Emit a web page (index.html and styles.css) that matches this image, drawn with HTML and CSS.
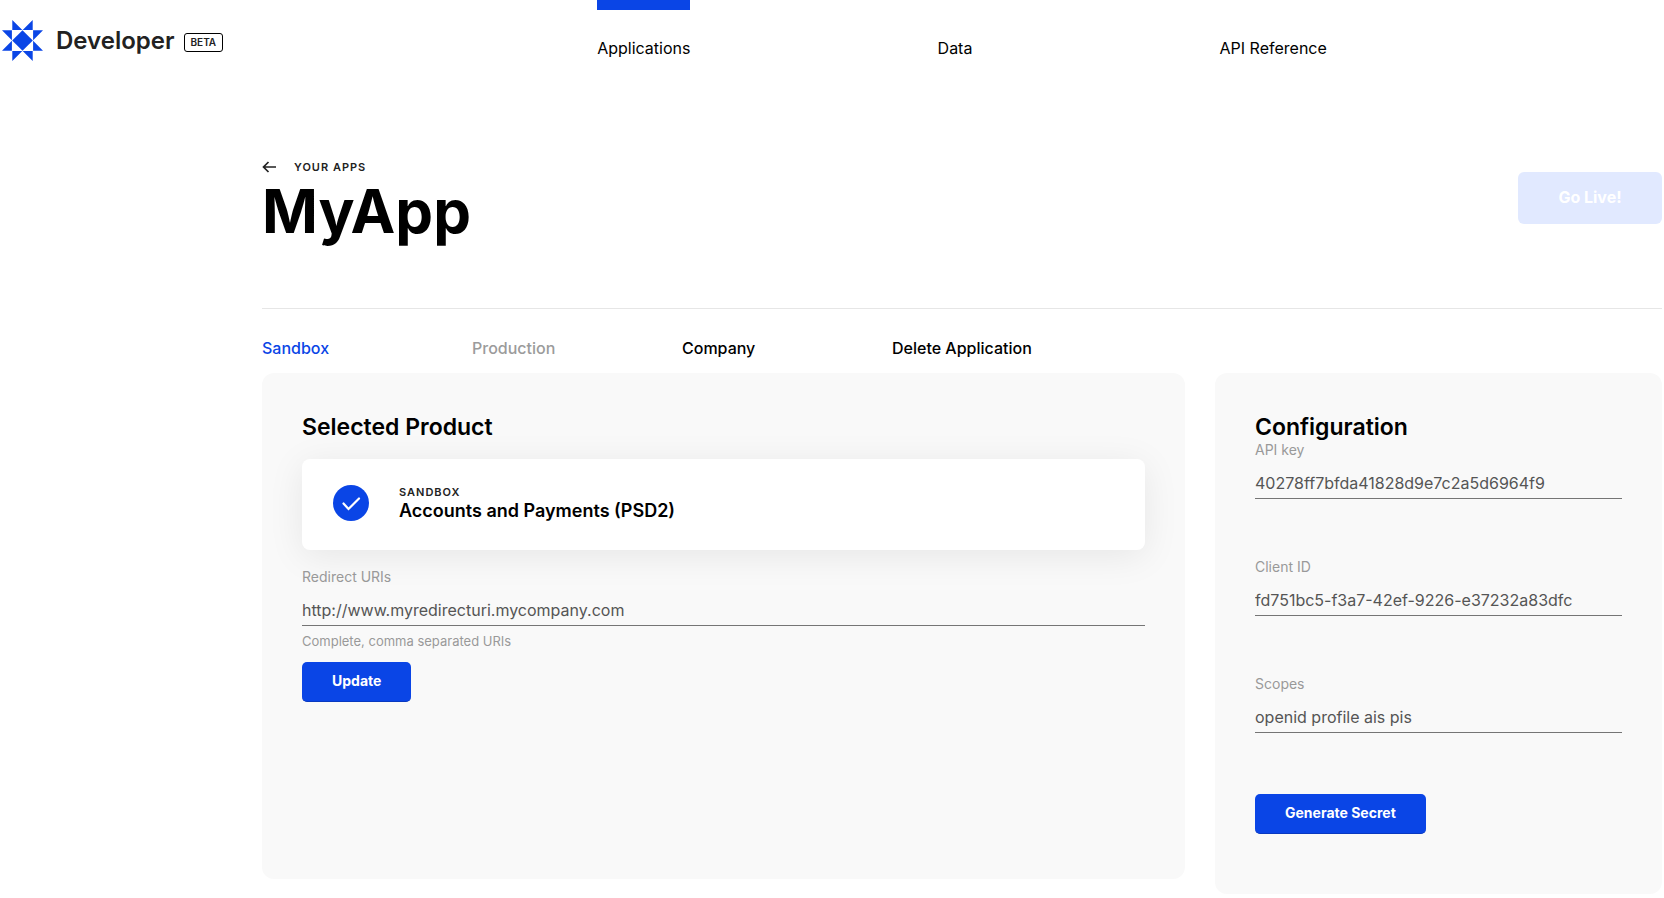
FILE: index.html
```html
<!DOCTYPE html>
<html lang="en">
<head>
<meta charset="utf-8">
<title>MyApp - Developer</title>
<link rel="stylesheet" href="styles.css">
</head>
<body>
<header class="site-header">
  <a class="brand" href="#">
    <svg class="brand-mark" viewBox="0 0 41 41" width="41" height="41" aria-hidden="true">
      <g fill="#0a45e6">
        <path d="M20.500 10.200L30.800 20.500L20.500 30.800L10.200 20.500Z"/>
        <path d="M10.300 0L20.300 9.900H10.300ZM30.700 0L20.700 9.900H30.700ZM10.300 41L20.300 31.100H10.300ZM30.700 41L20.700 31.100H30.700Z"/>
        <path d="M0 10.300H9.900V20.300ZM0 30.700H9.900V20.700ZM41 10.300H31.100V20.300ZM41 30.700H31.100V20.700Z"/>
      </g>
    </svg>
    <span class="brand-name">Developer</span>
    <span class="beta">BETA</span>
  </a>
  <nav class="main-nav">
    <a class="nav-link active" href="#">Applications</a>
    <a class="nav-link" href="#">Data</a>
    <a class="nav-link" href="#">API Reference</a>
  </nav>
</header>
<main class="page">
  <section class="title-row">
    <div>
      <a class="back" href="#">
        <svg width="14" height="12" viewBox="0 0 14 12" fill="none" stroke="#222" stroke-width="1.700" aria-hidden="true"><path d="M14 6H1.500M6.500 1L1.500 6L6.500 11"/></svg>
        Your apps
      </a>
      <h1 class="app-name">MyApp</h1>
    </div>
    <button class="go-live" type="button" disabled>Go Live!</button>
  </section>
  <nav class="tabs">
    <a class="tab current" href="#">Sandbox</a>
    <a class="tab muted" href="#">Production</a>
    <a class="tab" href="#">Company</a>
    <a class="tab" href="#">Delete Application</a>
  </nav>
  <div class="panels">
    <section class="panel panel-product">
      <h2 class="panel-title">Selected Product</h2>
      <div class="product">
        <svg width="36" height="36" viewBox="0 0 36 36" aria-hidden="true"><circle cx="18" cy="18" r="18" fill="#0a45e6"/><path d="M10.500 18.500L15.500 24L26 13.500" fill="none" stroke="#fff" stroke-width="2.200" stroke-linecap="round"/></svg>
        <div>
          <div class="eyebrow">Sandbox</div>
          <div class="product-name">Accounts and Payments (PSD2)</div>
        </div>
      </div>
      <div class="field">
        <label for="uris">Redirect URIs</label>
        <input id="uris" type="text" value="http://www.myredirecturi.mycompany.com">
        <small class="hint">Complete, comma separated URIs</small>
      </div>
      <button class="btn" type="button">Update</button>
    </section>
    <section class="panel panel-config">
      <h2 class="panel-title">Configuration</h2>
      <div class="config-fields">
        <div class="field">
          <label for="key">API key</label>
          <input id="key" type="text" value="40278ff7bfda41828d9e7c2a5d6964f9" readonly>
        </div>
        <div class="field">
          <label for="client">Client ID</label>
          <input id="client" type="text" value="fd751bc5-f3a7-42ef-9226-e37232a83dfc" readonly>
        </div>
        <div class="field">
          <label for="scopes">Scopes</label>
          <input id="scopes" type="text" value="openid profile ais pis" readonly>
        </div>
      </div>
      <button class="btn" type="button">Generate Secret</button>
    </section>
  </div>
</main>
</body>
</html>
```
FILE: styles.css
```css
* { box-sizing: border-box; }
body {
  margin: 0;
  background: #fff;
  color: #000;
  font-family: Inter, "Liberation Sans", sans-serif;
  font-size: 16px;
  line-height: 20px;
}
a { color: inherit; text-decoration: none; }
button, input { font-family: inherit; }

.site-header {
  display: grid;
  grid-template-columns: 350px 1fr 90px;
  align-items: start;
}
.brand {
  display: flex;
  align-items: center;
  padding: 20px 0 0 2px;
  color: #222;
}
.brand-name {
  margin-left: 13px;
  font-size: 24px;
  line-height: 28px;
  font-weight: 600;
}
.beta {
  margin: 4px 0 0 9px;
  padding: 0 6px;
  border: 1px solid #000;
  border-radius: 3px;
  font-size: 10px;
  line-height: 17px;
  font-weight: 600;
}
.main-nav { display: flex; justify-content: space-evenly; }
.nav-link { padding-top: 28px; border-top: 10px solid transparent; }
.nav-link.active { border-top-color: #0a45e6; }

.page { padding: 98px 2px 0 262px; }
.title-row {
  display: flex;
  justify-content: space-between;
  align-items: flex-start;
  padding-bottom: 60px;
  border-bottom: 1px solid #e6e6e6;
}
.back, .eyebrow {
  color: #222;
  font-size: 11px;
  line-height: 16px;
  font-weight: 600;
  letter-spacing: 1px;
  text-transform: uppercase;
}
.back { display: flex; align-items: center; gap: 18px; }
.app-name {
  margin: 0;
  font-size: 60px;
  line-height: 73px;
  font-weight: 700;
}
.go-live {
  width: 144px;
  height: 52px;
  margin-top: 13px;
  padding-bottom: 3px;
  border: 0;
  border-radius: 6px;
  background: #e1e9ff;
  color: #fff;
  font-size: 16px;
  font-weight: 700;
}
.tabs {
  display: grid;
  grid-template-columns: repeat(4, 210px);
  padding: 29px 0 15px;
}
.tab { font-weight: 500; }
.tab.current { color: #0a45e6; }
.tab.muted { color: #9b9b9b; }

.panels {
  display: grid;
  grid-template-columns: 923fr 447fr;
  gap: 30px;
  align-items: start;
}
.panel { padding: 40px; border-radius: 12px; background: #f9f9f9; }
.panel-product { min-height: 506px; }
.panel-config { padding-bottom: 60px; }
.panel-title {
  margin: 0;
  font-size: 23px;
  line-height: 28px;
  font-weight: 600;
}
.product {
  display: flex;
  align-items: center;
  gap: 30px;
  height: 91px;
  margin: 18px 0;
  padding: 0 31px 4px;
  border-radius: 8px;
  background: #fff;
  box-shadow: 0 6px 36px rgba(0, 0, 0, 0.08);
}
.product-name { font-size: 18px; line-height: 22px; font-weight: 600; }
.field { display: flex; flex-direction: column; }
.field label { color: #999; font-size: 14px; line-height: 18px; }
.field input {
  height: 40px;
  padding: 8px 0 0;
  border: 0;
  border-bottom: 1px solid #757575;
  border-radius: 0;
  outline: 0;
  background: transparent;
  color: #555;
  font-size: 16px;
}
.hint { padding: 6px 0 12px; color: #999; font-size: 13px; line-height: 18px; }
.btn {
  height: 40px;
  padding: 0 30px 2px;
  border: 0;
  border-bottom: 1px solid #0939c0;
  border-radius: 5px;
  background: #0a45e6;
  color: #fff;
  font-size: 14px;
  font-weight: 700;
}
.config-fields { display: grid; gap: 59px; margin-bottom: 61px; }
```
